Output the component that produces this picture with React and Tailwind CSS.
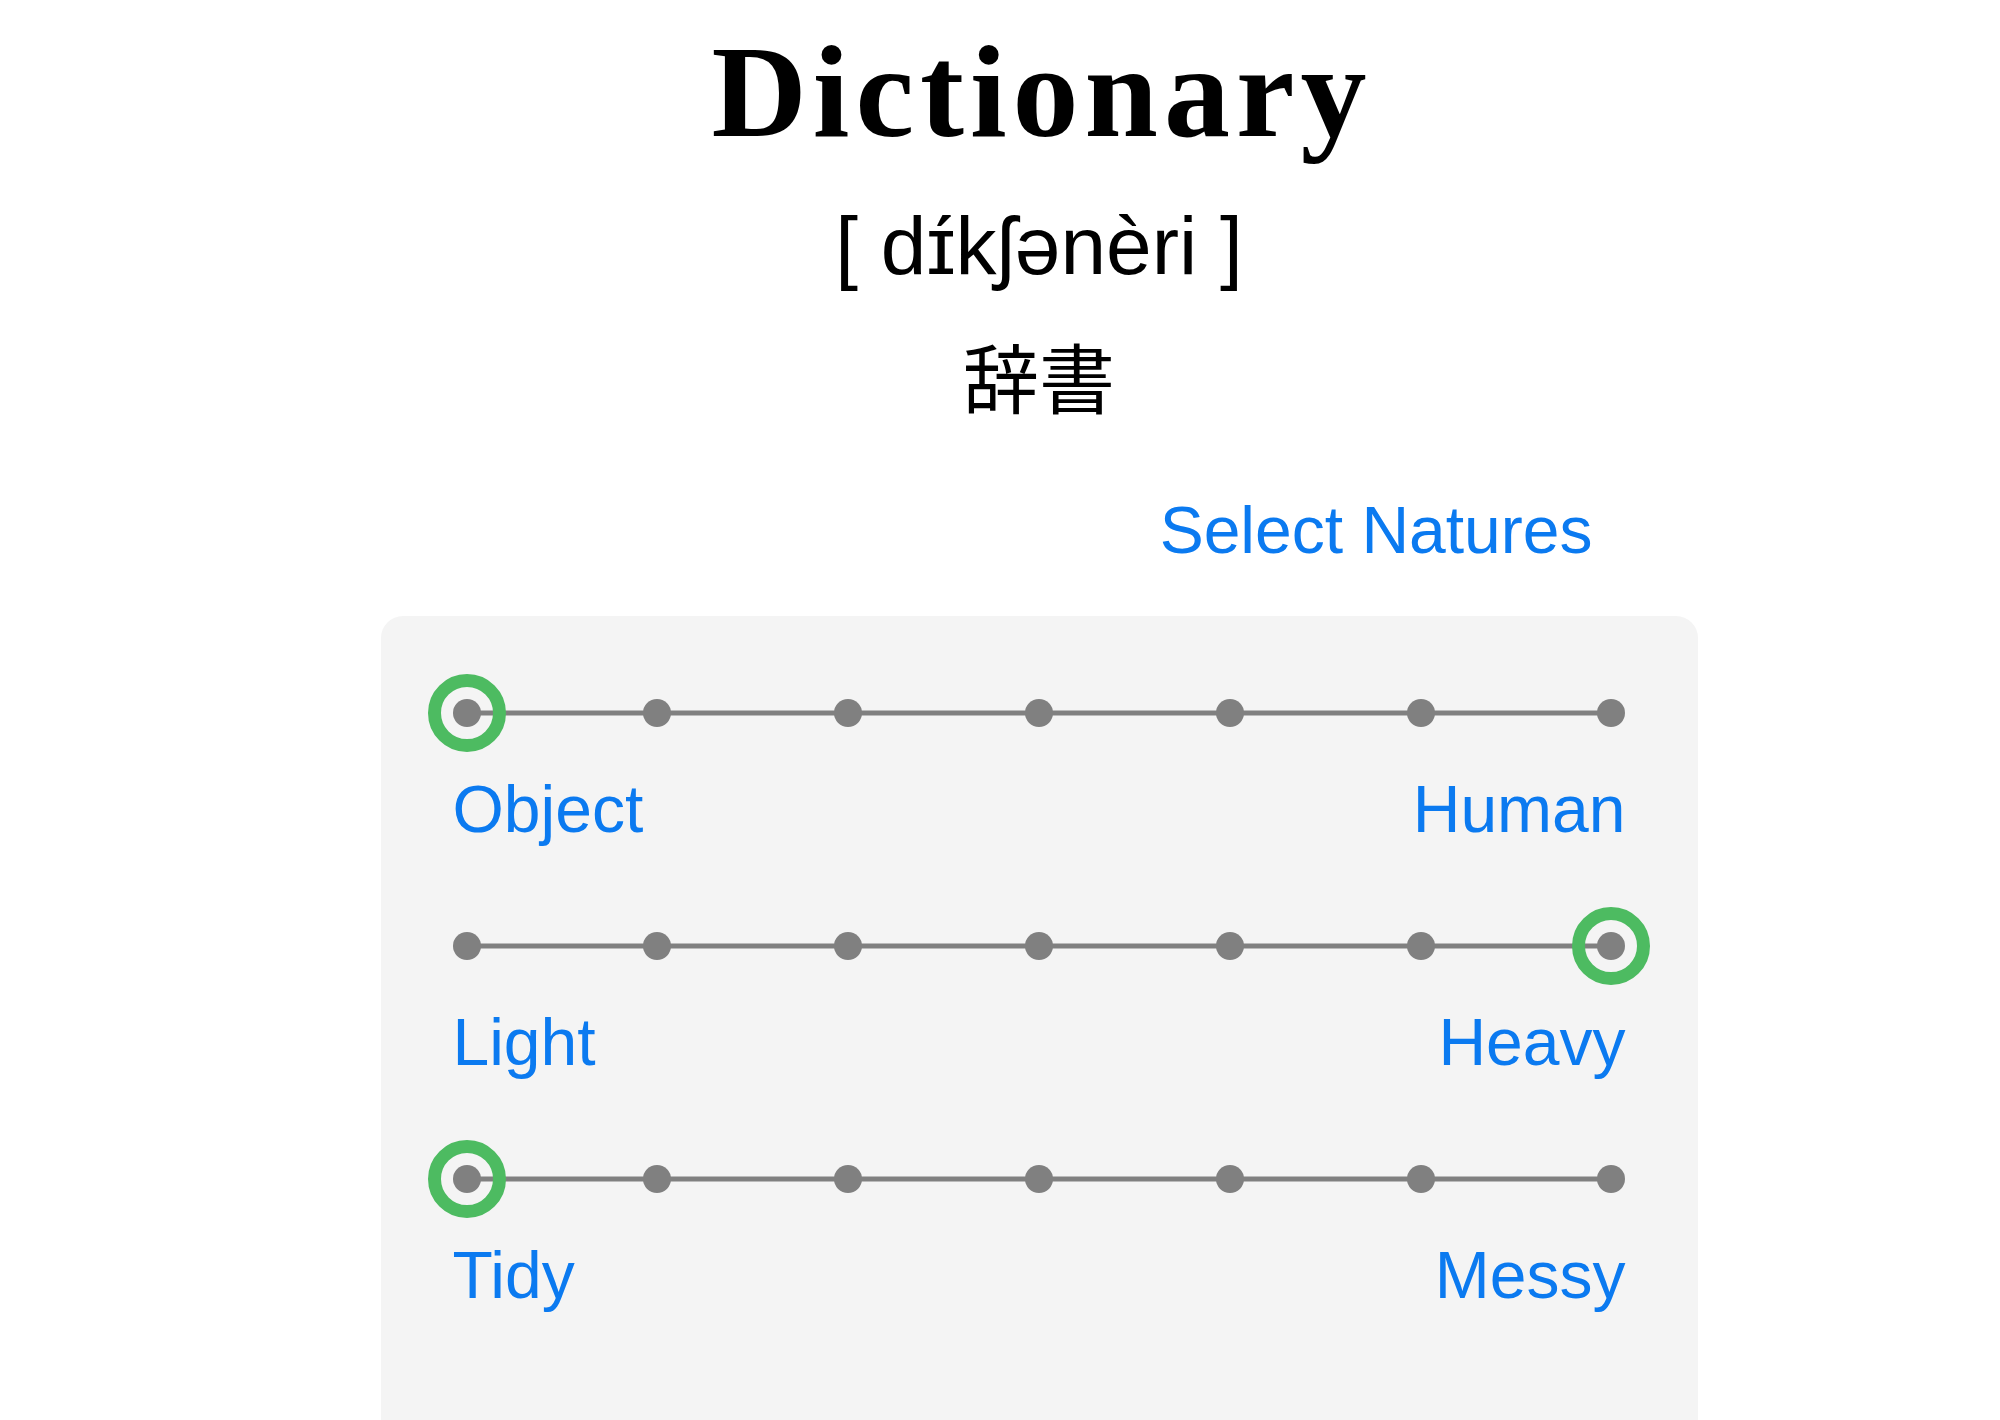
const rows = [
  { left: "Object", right: "Human", value: 0 },
  { left: "Light", right: "Heavy", value: 6 },
  { left: "Tidy", right: "Messy", value: 0 },
];

const steps = [0, 1, 2, 3, 4, 5, 6];

const NatureSlider = ({ left, right, value, first }) => {
  return (
    <div className={first ? "" : "mt-[66px]"}>
      <div className="relative h-[76px] flex items-center justify-between">
        <div className="absolute left-[14px] right-[14px] top-1/2 -translate-y-1/2 h-[5px] bg-[#808080]" />
        {steps.map((s) => (
          <div key={s} className="relative w-[28px] h-[28px] rounded-full bg-[#808080]">
            {s === value && (
              <div className="absolute -inset-[25px] rounded-full border-[13px] border-solid border-[#4dbb61]" />
            )}
          </div>
        ))}
      </div>
      <div className="mt-[25px] flex justify-between text-[66px] leading-none text-[#0b7af0]">
        <span>{left}</span>
        <span>{right}</span>
      </div>
    </div>
  );
};

export default function App() {
  return (
    <div
      className="min-h-screen bg-white pl-[78px] flex flex-col items-center"
      style={{ fontFamily: '"Liberation Sans", "DejaVu Sans", sans-serif' }}
    >
      <h1
        className="pt-[26px] pl-[6px] text-[132px] leading-none font-bold tracking-[6px] text-black"
        style={{ fontFamily: '"Liberation Serif", serif' }}
      >
        Dictionary
      </h1>
      <div className="mt-[47px] text-[82px] leading-none text-black">[ dɪ́kʃənèri ]</div>
      <div
        className="mt-[50px] text-[76px] leading-none text-black"
        style={{ fontFamily: '"Noto Sans CJK JP", sans-serif' }}
      >
        辞書
      </div>
      <div className="mt-[84px] w-[1317px] flex justify-end pr-[105px]">
        <button className="text-[66px] leading-none text-[#0b7af0]">Select Natures</button>
      </div>
      <div className="mt-[53px] w-[1317px] rounded-[22px] bg-[#f4f4f4] px-[72px] pt-[59px] pb-[160px]">
        {rows.map((r, i) => (
          <NatureSlider key={r.left} {...r} first={i === 0} />
        ))}
      </div>
    </div>
  );
}
